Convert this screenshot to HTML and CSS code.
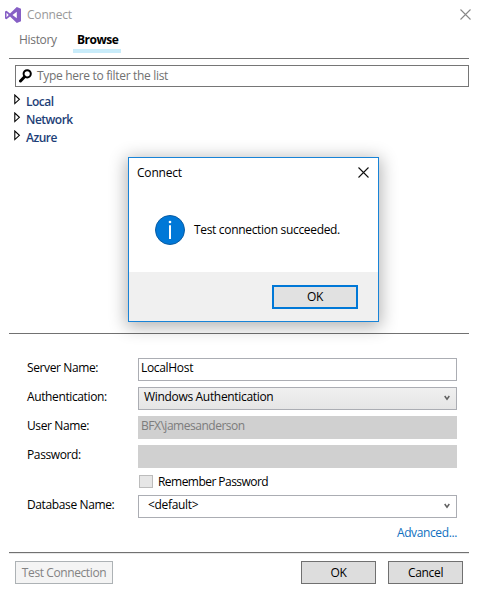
FILE: index.html
```html
<!DOCTYPE html>
<html lang="en">
<head>
<meta charset="utf-8">
<title>Connect</title>
<link rel="stylesheet" href="styles.css">
</head>
<body>
<main class="window">
  <header class="titlebar">
    <svg class="logo" width="16" height="16" viewBox="0 0 16 16"><path fill="#865fc5" fill-rule="evenodd" d="M11.8 0 16 1.7V14.3L11.8 16 5 9.5 1.5 12.2 0 11.4V4.6L1.5 3.8 5 6.5ZM11.8 4.7 7.5 8l4.3 3.3ZM1.5 5.8V10.2L3.7 8Z"/></svg>
    <span class="caption">Connect</span>
    <svg class="close" width="11" height="11" viewBox="0 0 11 11"><path d="M.5.5l10 10M10.5.5l-10 10"/></svg>
  </header>
  <nav class="tabs">
    <span class="tab tab-history">History</span>
    <span class="tab active">Browse</span>
  </nav>
  <section class="browser">
    <div class="search">
      <svg width="13" height="14" viewBox="0 0 13 14"><circle cx="8.2" cy="4.8" r="3.6" fill="none" stroke="#000" stroke-width="2"/><path d="M5.6 7.8 1.5 12" stroke="#000" stroke-width="3" stroke-linecap="round"/></svg>
      <span class="hint">Type here to filter the list</span>
    </div>
    <ul class="tree">
      <li><svg width="7" height="11" viewBox="0 0 7 11"><path d="M.8 1v8.6L5.4 5.3Z"/></svg><span>Local</span></li>
      <li><svg width="7" height="11" viewBox="0 0 7 11"><path d="M.8 1v8.6L5.4 5.3Z"/></svg><span>Network</span></li>
      <li><svg width="7" height="11" viewBox="0 0 7 11"><path d="M.8 1v8.6L5.4 5.3Z"/></svg><span>Azure</span></li>
    </ul>
  </section>
  <section class="form">
    <label>Server Name:</label><div class="field input"><span>LocalHost</span></div>
    <label>Authentication:</label><div class="field select shaded"><span>Windows Authentication</span><svg class="chev" width="6" height="6" viewBox="0 0 6 6"><path d="M.7 1 3 4.2 5.3 1"/></svg></div>
    <label>User Name:</label><div class="field disabled"><span class="user">BFX\jamesanderson</span></div>
    <label>Password:</label><div class="field disabled"></div>
    <div class="remember"><i class="box"></i><span>Remember Password</span></div>
    <label class="l-db">Database Name:</label><div class="field select database"><span>&lt;default&gt;</span><svg class="chev" width="6" height="6" viewBox="0 0 6 6"><path d="M.7 1 3 4.2 5.3 1"/></svg></div>
    <a class="advanced">Advanced...</a>
  </section>
  <footer class="actions">
    <button class="btn test" disabled>Test Connection</button>
    <button class="btn">OK</button>
    <button class="btn">Cancel</button>
  </footer>
</main>
<aside class="dialog">
  <div class="dialog-title">
    <span class="caption">Connect</span>
    <svg class="close" width="11" height="11" viewBox="0 0 11 11"><path d="M.5.5l10 10M10.5.5l-10 10"/></svg>
  </div>
  <div class="message">
    <svg width="30" height="30" viewBox="0 0 30 30"><circle cx="15" cy="15" r="14.5" fill="#0078d7" stroke="#0a5ca3"/><path d="M15 10.2V24" stroke="#fff" stroke-width="2"/><circle cx="15" cy="7" r="1.3" fill="#fff"/></svg>
    <span>Test connection succeeded.</span>
  </div>
  <div class="dialog-actions"><button class="btn primary">OK</button></div>
</aside>
</body>
</html>
```
FILE: styles.css
```css
* { box-sizing: border-box; }
body {
  margin: 0;
  width: 480px;
  height: 591px;
  overflow: hidden;
  position: relative;
  background: #fff;
  color: #000;
  font: 12px/18px "Open Sans", "Noto Sans", sans-serif;
  letter-spacing: -.32px;
  white-space: nowrap;
}
svg { display: block; flex: none; }
.window { display: flex; flex-direction: column; height: 591px; padding: 0 11px 0 9px; }
.titlebar { display: flex; align-items: center; height: 29px; margin: 0 -2px 0 -4px; }
.titlebar .caption { margin-left: 6px; color: #999; }
.close { margin-left: auto; fill: none; stroke: #111; stroke-width: 1.1; }
.titlebar .close { stroke: #888; }
.caption { letter-spacing: -.2px; }
.tabs { display: flex; height: 30px; padding: 2px 0 0 10px; border-bottom: 1px solid #717171; }
.tab { height: 22px; color: #717171; }
.tab-history { width: 54px; }
.tab.active { width: 48px; padding-left: 4px; color: #000; font-weight: 700; letter-spacing: -.5px; border-bottom: 4px solid #c9ecfa; }
.browser { height: 275px; padding: 6px 0 0 6px; border-bottom: 1px solid #717171; }
.search { display: flex; align-items: center; gap: 5px; height: 22px; padding-left: 3px; border: 1px solid #767676; color: #717171; }
.tree { margin: 5px 0 0 -1px; padding: 0; list-style: none; color: #1e3f77; font-weight: 600; letter-spacing: -.5px; }
.tree li { display: flex; height: 18px; gap: 5px; }
.tree span { padding-top: 1px; }
.tree svg { margin-top: 2px; fill: #fff; stroke: #000; stroke-width: 1.1; }
.form {
  display: grid;
  grid-template-columns: 111px 319px;
  grid-auto-rows: 23px;
  row-gap: 6px;
  height: 219px;
  padding: 24px 0 0 18px;
  border-bottom: 1px solid #717171;
  box-shadow: 0 1px #e8e8e8;
}
.form label { line-height: 19px; letter-spacing: -.38px; }
.field { display: flex; height: 23px; border: 1px solid #abadb3; padding-left: 2px; }
.select { justify-content: space-between; padding-left: 5px; padding-right: 6px; line-height: 17px; }
.shaded { background: linear-gradient(#f0f0f0, #e5e5e5); }
.disabled { background: #d0d0d0; border-color: #d0d0d0; color: #7c7c7c; letter-spacing: -.48px; }
.chev { margin-top: 7px; fill: none; stroke: #606060; stroke-width: 1.5; }
.remember { grid-column: 2; display: flex; height: 15px; gap: 5px; align-items: center; padding-left: 1px; letter-spacing: -.54px; }
.box { width: 14px; height: 13px; background: #e6e6e6; border: 1px solid #bcbcbc; }
.l-db, .database { margin-top: -8px; }
.database { padding-left: 9px; }
.advanced { grid-column: 2; justify-self: end; margin-top: -8px; color: #1070c0; letter-spacing: -.38px; }
.actions { display: flex; gap: 12px; padding: 8px 6px 0; }
.btn { display: flex; align-items: center; justify-content: center; width: 75px; height: 23px; padding: 0; border: 1px solid #707070; background: #ddd; font: inherit; letter-spacing: -.32px; color: #000; }
.test { width: 98px; margin-right: auto; border-color: #adb2b5; background: #f4f4f4; color: #838383; letter-spacing: -.4px; }
.dialog { position: absolute; left: 128px; top: 157px; width: 251px; height: 165px; display: flex; flex-direction: column; border: 1px solid #1883d7; background: #fff; box-shadow: 0 3px 16px 2px rgba(0,0,0,.3); }
.dialog-title { display: flex; align-items: center; height: 30px; padding: 0 9px 0 8px; }
.dialog-title .close { margin-top: -2px; }
.message { display: flex; align-items: center; gap: 9px; height: 84px; padding: 0 0 0 26px; }
.dialog-actions { display: flex; flex: 1; justify-content: flex-end; padding: 13px 20px 0; background: #f0f0f0; }
.primary { width: 86px; height: 24px; border: 2px solid #0078d7; background: #e1e1e1; }
```
